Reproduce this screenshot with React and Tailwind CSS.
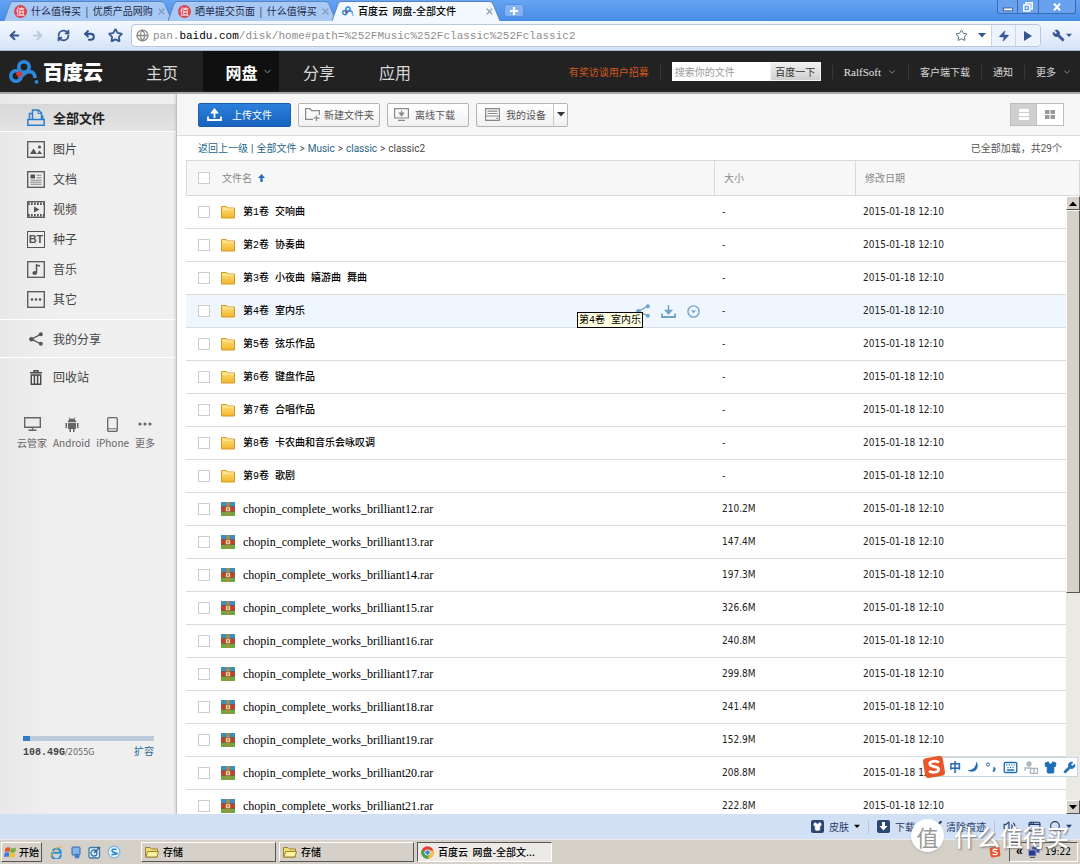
import React, { useState } from "react";
import {
  ArrowLeft,
  ArrowRight,
  RefreshCw,
  Undo2,
  Star,
  Globe,
  Wrench,
  ChevronDown,
  Shirt,
  Keyboard,
  Volume2,
  AppWindow,
  Search,
  Zap,
} from "lucide-react";

const DATE = "2015-01-18 12:10";

const files = [
  { name: "第1卷 交响曲", size: "-", type: "folder" },
  { name: "第2卷 协奏曲", size: "-", type: "folder" },
  { name: "第3卷 小夜曲 嬉游曲 舞曲", size: "-", type: "folder" },
  { name: "第4卷 室内乐", size: "-", type: "folder", hovered: true },
  { name: "第5卷 弦乐作品", size: "-", type: "folder" },
  { name: "第6卷 键盘作品", size: "-", type: "folder" },
  { name: "第7卷 合唱作品", size: "-", type: "folder" },
  { name: "第8卷 卡农曲和音乐会咏叹调", size: "-", type: "folder" },
  { name: "第9卷 歌剧", size: "-", type: "folder" },
  { name: "chopin_complete_works_brilliant12.rar", size: "210.2M", type: "rar" },
  { name: "chopin_complete_works_brilliant13.rar", size: "147.4M", type: "rar" },
  { name: "chopin_complete_works_brilliant14.rar", size: "197.3M", type: "rar" },
  { name: "chopin_complete_works_brilliant15.rar", size: "326.6M", type: "rar" },
  { name: "chopin_complete_works_brilliant16.rar", size: "240.8M", type: "rar" },
  { name: "chopin_complete_works_brilliant17.rar", size: "299.8M", type: "rar" },
  { name: "chopin_complete_works_brilliant18.rar", size: "241.4M", type: "rar" },
  { name: "chopin_complete_works_brilliant19.rar", size: "152.9M", type: "rar" },
  { name: "chopin_complete_works_brilliant20.rar", size: "208.8M", type: "rar" },
  { name: "chopin_complete_works_brilliant21.rar", size: "222.8M", type: "rar" },
];

/* ---------- icons ---------- */

const Caret = ({ className = "" }) => (
  <svg className={`shrink-0 ${className}`} width="8" height="5" viewBox="0 0 8 5">
    <path d="M0 0h8L4 4.6z" fill="currentColor" />
  </svg>
);

const CloudLogo = ({ className = "" }) => (
  <svg className={`shrink-0 ${className}`} viewBox="0 0 30 24" fill="none">
    <circle cx="15" cy="7" r="5.2" stroke="#2a8ae0" strokeWidth="3.6" />
    <circle cx="7" cy="16" r="5.2" stroke="#2a8ae0" strokeWidth="3.6" />
    <path d="M9.5 18.5 C14 16 15 12 19.5 11.6 C24 11.4 26 14 26 18" stroke="#2a8ae0" strokeWidth="3.6" />
    <path d="M6.5 13.5 L11 10.5 L14 14.5 L10 18z" fill="#d9383a" />
    <circle cx="27.5" cy="21.8" r="1.9" fill="#2a8ae0" />
  </svg>
);

const ZhiIcon = () => (
  <span className="flex size-[13px] shrink-0 items-center justify-center rounded-full bg-[#dc4455] text-[9px] leading-none text-white">
    值
  </span>
);

const FolderIcon = () => (
  <svg className="shrink-0" width="14" height="14" viewBox="0 0 14 14">
    <defs>
      <linearGradient id="fold" x1="0" y1="0" x2="0" y2="1">
        <stop offset="0" stopColor="#ffe07c" />
        <stop offset="1" stopColor="#f2b62e" />
      </linearGradient>
    </defs>
    <path d="M.5 1.5h5l1 1.5h7v10H.5z" fill="url(#fold)" stroke="#d59a26" />
    <path d="M1.500 4h11" stroke="#fff0b4" />
  </svg>
);

const RarIcon = () => (
  <svg className="shrink-0" width="14" height="14" viewBox="0 0 14 14">
    <rect width="14" height="4.500" fill="#3f8fb5" />
    <rect y="4.500" width="14" height="5" fill="#c2402f" />
    <rect y="9.500" width="14" height="4.500" fill="#6fa83a" />
    <path d="M0 4.500h14M0 9.500h14" stroke="#5b3a2c" strokeWidth=".6" />
    <rect x="5.500" width="3" height="14" fill="#b08a4c" />
    <rect x="4.500" y="4.800" width="5" height="4.600" rx="1" fill="#f2d9a0" stroke="#9c5a2c" strokeWidth=".8" />
    <rect x="6.500" y="6" width="1" height="2.200" fill="#9c3d1f" />
  </svg>
);

const Frame = ({ children }) => (
  <svg className="shrink-0" width="18" height="17" viewBox="0 0 18 17" fill="none" stroke="#555" strokeWidth="1.300">
    <rect x=".7" y=".7" width="16.600" height="15.600" />
    {children}
  </svg>
);

const sideIcons = {
  all: (
    <svg className="shrink-0" width="18" height="17" viewBox="0 0 18 17" fill="none" stroke="#2a7ed0" strokeWidth="1.500">
      <path d="M.8 10.500h16.400v5.700H.8z" />
      <path d="M2.500 10V4.500h3M5.500 10V1h6l3 3v6M15.800 10V6.500" />
      <path d="M11 1v3.500h3.500" strokeWidth="1" />
    </svg>
  ),
  image: (
    <Frame>
      <path d="M3 13l3.500-5.500L10 13zM10 13l2.500-3.500L15 13z" fill="#555" stroke="none" />
      <circle cx="12.500" cy="6" r="1.600" fill="#555" stroke="none" />
    </Frame>
  ),
  doc: (
    <Frame>
      <rect x="3.500" y="3.500" width="4.500" height="4" fill="#555" stroke="none" />
      <path d="M9.500 4.200h5M9.500 6.700h5M3.500 9.300h11M3.500 11.300h11M3.500 13.300h11" stroke="#888" strokeWidth="1.100" />
    </Frame>
  ),
  video: (
    <Frame>
      <path d="M1 2.800h16M1 14.200h16" strokeWidth="2.400" strokeDasharray="1.700 1.300" />
      <path d="M7 5.500l5.500 3-5.500 3z" fill="#555" stroke="none" />
    </Frame>
  ),
  music: (
    <Frame>
      <path d="M9.500 12V4l3.500.9" strokeWidth="1.500" />
      <ellipse cx="7.700" cy="12" rx="2.300" ry="1.900" fill="#555" stroke="none" />
    </Frame>
  ),
  other: (
    <Frame>
      <g fill="#555" stroke="none">
        <circle cx="5" cy="8.500" r="1.300" />
        <circle cx="9" cy="8.500" r="1.300" />
        <circle cx="13" cy="8.500" r="1.300" />
      </g>
    </Frame>
  ),
  seed: (
    <span className="flex h-[17px] w-[18px] shrink-0 items-center justify-center border border-[#555] font-['Liberation_Sans',sans-serif] text-[11px] font-bold leading-none text-[#555]">
      BT
    </span>
  ),
};

const ShareIcon = ({ className = "" }) => (
  <svg className={`shrink-0 ${className}`} width="14" height="14" viewBox="0 0 14 14" fill="currentColor">
    <path d="M12 2.200L2.500 7.200 12 12" fill="none" stroke="currentColor" strokeWidth="1.300" />
    <circle cx="11.800" cy="2.300" r="2" />
    <circle cx="2.400" cy="7.200" r="2.200" />
    <circle cx="11.800" cy="11.700" r="2" />
  </svg>
);

const TrashIcon = () => (
  <svg className="shrink-0" width="12" height="15" viewBox="0 0 12 15" fill="none" stroke="#484848" strokeWidth="1.400">
    <path d="M0 2.700h12M4 2.500V.7h4v1.800M1.300 5h9.400v9.200H1.300z" />
    <path d="M4.400 5v9M7.600 5v9" />
  </svg>
);

const DownloadIcon = ({ up = false }) => (
  <svg className="shrink-0" width="15" height="13" viewBox="0 0 15 13" fill="none" stroke="currentColor" strokeWidth="1.800">
    <path d="M1 8.500V12h13V8.500" />
    {up ? (
      <path d="M7.500 10V4M5 4.500l2.500-3 2.500 3z" fill="currentColor" strokeWidth="1.800" />
    ) : (
      <path d="M7.500 0v6M4.500 5.500h6l-3 3.200z" fill="currentColor" strokeWidth="1.400" />
    )}
  </svg>
);

const SogouIcon = ({ className = "" }) => (
  <svg className={`shrink-0 ${className}`} viewBox="0 0 24 24">
    <rect x="2" y="2" width="20" height="20" rx="3.500" fill="#e8552a" transform="rotate(-9 12 12)" />
    <path
      d="M17 7.500C14 5.300 7.500 6 7.800 9.200c.3 3.100 9 1.800 8.900 5.200-.1 3.200-6.500 3.800-9.700 1.600"
      fill="none"
      stroke="#fff"
      strokeWidth="2.700"
    />
  </svg>
);

const SmallFolder = () => (
  <svg className="shrink-0" width="14" height="12" viewBox="0 0 14 12">
    <path d="M.5 1.500h4.500l1.500 1.500h6v8H.5z" fill="#f5dc70" stroke="#9b8232" />
    <path d="M.8 11l2-5.500H13.500l-1.500 5.500z" fill="#fff0a0" stroke="#9b8232" />
  </svg>
);

/* ---------- browser chrome ---------- */

const Tab = ({ title, icon, active }) => (
  <div className={`relative -ml-1 flex h-[20px] w-[168px] items-center pl-[10px] pr-[7px] ${active ? "z-10" : ""}`}>
    <svg className="absolute inset-0 size-full" viewBox="0 0 168 20" preserveAspectRatio="none">
      <path
        d="M0 20L6 3Q7 .5 9 .5H157Q160 .5 161 3L168 20"
        fill={active ? "#f3f8ff" : "#a9c9f5"}
        stroke="#5a86c4"
      />
    </svg>
    <button className="relative flex min-w-0 flex-1 items-center gap-1 text-left">
      {icon}
      <span className={`whitespace-pre text-[10px] leading-[14px] ${active ? "font-medium text-black" : "text-[#1d2c48]"}`}>
        {title}
      </span>
    </button>
    <button aria-label="关闭标签" className="relative ml-1 text-[#7f93b3]">
      <svg width="7" height="7" viewBox="0 0 7 7" stroke="currentColor" strokeWidth="1.200">
        <path d="M.7.7l5.600 5.600M6.300.7L.7 6.300" />
      </svg>
    </button>
  </div>
);

const TabStrip = () => (
  <div className="flex h-[21px] shrink-0 items-end bg-linear-to-b from-[#66a3f3] to-[#478de8] pl-2">
    <Tab title="什么值得买  |  优质产品网购" icon={<ZhiIcon />} />
    <Tab title="晒单提交页面  |  什么值得买" icon={<ZhiIcon />} />
    <Tab title="百度云  网盘-全部文件" icon={<CloudLogo className="h-[10px] w-[12px]" />} active />
    <button
      aria-label="新标签"
      className="mb-1 ml-1 flex h-[13px] w-[20px] items-center justify-center rounded-[3px] border border-[#5a90da] bg-[#83b3f4]"
    >
      <svg width="8" height="8" viewBox="0 0 8 8">
        <path d="M4 0v8M0 4h8" stroke="#fff" strokeWidth="2.200" />
      </svg>
    </button>
    <div className="mb-auto ml-auto mr-1 flex h-[14px] divide-x divide-[#3c6cae] rounded-b-[3px] border border-t-0 border-[#3c6cae] bg-[#68a2ee] text-white">
      <button aria-label="最小化" className="flex w-[20px] items-center justify-center">
        <svg width="10" height="10" viewBox="0 0 10 10"><rect x=".5" y="6" width="9" height="2.800" fill="#fff" stroke="#32558c" strokeWidth=".8" /></svg>
      </button>
      <button aria-label="还原" className="flex w-[21px] items-center justify-center">
        <svg width="10" height="10" viewBox="0 0 10 10" fill="none" stroke="#fff" strokeWidth="1.500">
          <path d="M3 2.500V.8h6.200V7H7.500" />
          <rect x=".8" y="3" width="6" height="6" />
          <path d="M3 6h1.800" />
        </svg>
      </button>
      <button aria-label="关闭" className="flex w-[36px] items-center justify-center">
        <svg width="8" height="8" viewBox="0 0 8 8" stroke="#fff" strokeWidth="2"><path d="M1 .5l6 7M7 .5l-6 7" /></svg>
      </button>
    </div>
  </div>
);

const AddressBar = () => (
  <div className="flex h-[30px] shrink-0 items-center border-b border-[#a9bbd4] bg-linear-to-b from-[#f3f8ff] to-[#d6e4f8] pl-2 pr-2 text-[#35568f]">
    <button aria-label="后退"><ArrowLeft size={13} strokeWidth={3.5} /></button>
    <button aria-label="前进" className="ml-[10px] text-[#bccade]"><ArrowRight size={13} strokeWidth={3.5} /></button>
    <button aria-label="刷新" className="ml-[13px]"><RefreshCw size={13} strokeWidth={3.5} /></button>
    <button aria-label="撤销" className="ml-[13px]"><Undo2 size={13} strokeWidth={3.8} /></button>
    <button aria-label="收藏" className="ml-3"><Star size={15} strokeWidth={2.8} /></button>
    <div className="ml-2 flex h-[23px] min-w-0 flex-1 items-center rounded-[4px] border border-[#b9c7dc] bg-white pl-1">
      <Globe size={13} strokeWidth={2.4} className="shrink-0 text-[#8a8a8a]" />
      <div className="ml-1 min-w-0 flex-1 truncate font-['Liberation_Mono',monospace] text-[11px] leading-[16px] text-[#8e8e8e]">
        pan.<span className="text-black">baidu.com</span>/disk/home#path=%252FMusic%252Fclassic%252Fclassic2
      </div>
      <button aria-label="加入收藏夹"><Star size={13} strokeWidth={1.8} className="text-[#4d6f80]" /></button>
      <Caret className="ml-[10px] mr-[5px]" />
      <div className="flex h-full divide-x divide-[#ccd6e6] rounded-r-[4px] border-l border-[#ccd6e6] bg-[#edf3fc]">
        <button aria-label="极速模式" className="flex w-6 items-center justify-center"><Zap size={12} fill="currentColor" strokeWidth={1} /></button>
        <button aria-label="转到" className="flex w-6 items-center justify-center">
          <svg width="8" height="10" viewBox="0 0 8 10"><path d="M0 0l8 5-8 5z" fill="currentColor" /></svg>
        </button>
      </div>
    </div>
    <button aria-label="工具" className="ml-[11px] flex items-center gap-px">
      <Wrench size={13} fill="currentColor" strokeWidth={1.5} className="-scale-x-100" />
      <Caret className="w-[6px]" />
    </button>
  </div>
);

/* ---------- site header ---------- */

const Divider = () => <span className="mx-[11px] h-[14px] w-px bg-[#3a3a3a]" />;

const SiteHeader = () => (
  <header className="flex h-[43px] shrink-0 items-center border-b-2 border-[#a4a4a4] bg-[#222] pl-[9px] pr-2 text-[#d8d8d8]">
    <a href="#home" className="flex items-center gap-1">
      <CloudLogo className="h-[24px] w-[30px]" />
      <span className="text-[20px] font-black leading-[24px] text-white">百度云</span>
    </a>
    <nav className="flex h-full text-[16px] leading-[20px]">
      <a href="#index" className="flex w-[100px] items-center justify-center pl-[18px]">主页</a>
      <a href="#disk" className="flex w-[76px] items-center justify-center gap-1 bg-[#101010] pl-4 font-bold text-white">
        网盘 <ChevronDown size={11} className="shrink-0 text-[#999]" />
      </a>
      <a href="#share" className="flex w-[76px] items-center justify-center pl-1">分享</a>
      <a href="#apps" className="flex w-[76px] items-center justify-center pl-1">应用</a>
    </nav>
    <div className="ml-auto flex items-center text-[10px] leading-[14px]">
      <a href="#interview" className="text-[#d2581e]">有奖访谈用户招募</a>
      <Divider />
      <form className="flex h-[19px] bg-white">
        <input
          aria-label="搜索你的文件"
          placeholder="搜索你的文件"
          className="w-[98px] px-[3px] text-[10px] text-black outline-none placeholder:text-[#999]"
        />
        <button type="button" className="w-[51px] border border-[#f4f4f4] bg-linear-to-b from-[#f0f0f0] to-[#cfcfcf] text-[#333]">
          百度一下
        </button>
      </form>
      <Divider />
      <a href="#user" className="flex items-center gap-[6px] font-['Liberation_Serif',serif] text-[11px] text-[#e2e2e2]">
        RalfSoft <ChevronDown size={10} className="text-[#999]" />
      </a>
      <Divider />
      <a href="#client">客户端下载</a>
      <Divider />
      <a href="#notice">通知</a>
      <Divider />
      <a href="#more" className="flex items-center gap-[6px]">
        更多 <ChevronDown size={10} className="text-[#999]" />
      </a>
    </div>
  </header>
);

/* ---------- sidebar ---------- */

const categories = [
  { key: "image", label: "图片" },
  { key: "doc", label: "文档" },
  { key: "video", label: "视频" },
  { key: "seed", label: "种子" },
  { key: "music", label: "音乐" },
  { key: "other", label: "其它" },
];

const Device = ({ label, children }) => (
  <a href="#device" className="flex flex-col items-center gap-1">
    <span className="flex h-[16px] items-center">{children}</span>
    <span className="text-[10px] leading-[14px]">{label}</span>
  </a>
);

const Sidebar = () => (
  <aside className="flex w-[177px] shrink-0 flex-col border-r border-[#c9c9c9] bg-linear-to-r from-[#e8e8e8] to-[#efefef] to-30% pt-[10px] text-[12px] leading-[16px] text-[#444]">
    <a href="#all" className="flex h-[28px] items-center gap-2 border-b border-white bg-linear-to-b from-[#d9d9d9] to-[#e3e3e3] pl-[27px] text-[13px] font-bold text-[#222]">
      {sideIcons.all}
      全部文件
    </a>
    <nav className="flex flex-col border-b border-white pt-[2px] pb-[5px]">
      {categories.map((c) => (
        <a key={c.key} href={`#${c.key}`} className="flex h-[30px] items-center gap-2 pl-[27px]">
          {sideIcons[c.key]}
          {c.label}
        </a>
      ))}
    </nav>
    <a href="#myshare" className="flex h-[38px] items-center gap-[10px] border-b border-white pl-[29px]">
      <ShareIcon className="text-[#555]" />
      我的分享
    </a>
    <a href="#recycle" className="flex h-[38px] items-center gap-[11px] pl-[30px]">
      <TrashIcon />
      回收站
    </a>
    <div className="mt-[20px] flex gap-[6px] pl-[17px] text-[#666]">
      <Device label="云管家">
        <svg width="17" height="14" viewBox="0 0 17 14" fill="none" stroke="currentColor" strokeWidth="1.400">
          <path d="M.7.7h15.600v9.600H.7zM8.500 10.500v2.500M4.500 13.300h8" />
        </svg>
      </Device>
      <Device label="Android">
        <svg width="14" height="15" viewBox="0 0 14 15" fill="currentColor">
          <path d="M3 5a4 3.500 0 018 0zM3 5.700h8V12H9.500v3H8v-3H6v3H4.500v-3H3zM.5 6H2v5H.5zM12 6h1.500v5H12z" />
          <path d="M4 .3l1 2M10 .3l-1 2" stroke="currentColor" strokeWidth=".8" />
        </svg>
      </Device>
      <Device label="iPhone">
        <svg width="11" height="15" viewBox="0 0 11 15" fill="none" stroke="currentColor" strokeWidth="1.300">
          <rect x=".7" y=".7" width="9.600" height="13.600" rx="1.200" />
          <path d="M1 11.800h9" strokeWidth=".9" />
        </svg>
      </Device>
      <Device label="更多">
        <svg width="14" height="4" viewBox="0 0 14 4" fill="currentColor">
          <circle cx="2" cy="2" r="1.600" /><circle cx="7" cy="2" r="1.600" /><circle cx="12" cy="2" r="1.600" />
        </svg>
      </Device>
    </div>
    <div className="mt-auto pb-[54px] pl-[23px] pr-[22px]">
      <div className="h-[5px] bg-[#bccbdc]">
        <div className="h-full bg-[#2f7cc8]" style={{ width: `${(108.49 / 2055) * 100}%` }} />
      </div>
      <div className="mt-[3px] flex justify-between text-[10px] leading-[14px]">
        <span className="text-[#666]">
          <b className="font-['Liberation_Mono',monospace] text-[#444]">108.49G</b>
          <span className="font-['DejaVu_Sans_Condensed','DejaVu_Sans',sans-serif] text-[9px]">/2055G</span>
        </span>
        <a href="#expand" className="text-[#2a6a94]">扩容</a>
      </div>
    </div>
  </aside>
);

/* ---------- file list ---------- */

const toolButton =
  "flex h-6 items-center rounded-[2px] border border-[#b4b4b4] bg-linear-to-b from-white to-[#f1f1f1] text-[#555]";

const Toolbar = () => (
  <div className="flex h-[42px] shrink-0 items-center gap-[7px] border-b border-[#dcdcdc] bg-[#f6f6f6] pl-[21px] pr-4 text-[10px] leading-[14px]">
    <button className="flex h-6 w-[93px] items-center gap-[10px] rounded-[2px] border border-[#1a5cad] bg-linear-to-b from-[#2b80dc] to-[#1763bd] pl-[8px] text-white">
      <DownloadIcon up />
      上传文件
    </button>
    <button className={`${toolButton} w-[82px] gap-1 pl-[6px]`}>
      <svg className="shrink-0" width="15" height="13" viewBox="0 0 15 13" fill="none" stroke="#888" strokeWidth="1.200">
        <path d="M8 11.400H.6V.6h4.400l1.500 2h7.900V7M11.500 7.500V13M8.800 10.200h5.700" />
      </svg>
      <span className="whitespace-nowrap">新建文件夹</span>
    </button>
    <button className={`${toolButton} w-[82px] gap-[6px] pl-[6px]`}>
      <svg width="15" height="13" viewBox="0 0 15 13" fill="none" stroke="#888" strokeWidth="1.200">
        <path d="M.6.600h13.800v9.400H.6zM4 12.400h7" />
        <path d="M7.500 2.500v3M5.500 5.200h4l-2 2.500z" fill="#888" />
      </svg>
      离线下载
    </button>
    <div className={toolButton}>
      <button className="flex h-full w-[76px] items-center gap-[6px] pl-2">
        <svg width="15" height="13" viewBox="0 0 15 13" fill="none" stroke="#888" strokeWidth="1.200">
          <path d="M.6.600h13.800v11.800H.6z" />
          <path d="M2.500 3.200h10M2.500 5.500h10M1 8h13M11.500 10.300h1.500" />
        </svg>
        我的设备
      </button>
      <button aria-label="选择设备" className="flex h-full w-[14px] items-center justify-center border-l border-[#c9c9c9]">
        <Caret className="text-[#333]" />
      </button>
    </div>
    <div className="ml-auto flex h-[23px] divide-x divide-[#c4c4c4] border border-[#bdbdbd]">
      <button aria-label="列表模式" className="flex w-[26px] items-center justify-center bg-[#cfcfcf]">
        <svg width="10" height="11" viewBox="0 0 10 11" fill="#fff">
          <path d="M0 0h10v3H0zM0 4h10v3H0zM0 8h10v3H0z" />
        </svg>
      </button>
      <button aria-label="缩略图模式" className="flex w-[26px] items-center justify-center bg-white">
        <svg width="10" height="9" viewBox="0 0 10 9" fill="#999">
          <path d="M0 0h4.500v4H0zM5.500 0H10v4H5.500zM0 5h4.500v4H0zM5.500 5H10v4H5.500z" />
        </svg>
      </button>
    </div>
  </div>
);

const Breadcrumb = () => (
  <div className="flex h-6 shrink-0 items-center gap-[3px] pl-[21px] pr-[18px] pt-px font-['Roboto','Noto_Sans_CJK_SC',sans-serif] text-[10px] leading-[14px] text-[#444]">
    <a href="#up" className="text-[#1f6587]">返回上一级</a>
    <span>|</span>
    <a href="#root" className="text-[#1f6587]">全部文件</a>
    <span>&gt;</span>
    <a href="#music" className="text-[#1f6587]">Music</a>
    <span>&gt;</span>
    <a href="#classic" className="text-[#1f6587]">classic</a>
    <span>&gt;</span>
    <span>classic2</span>
    <span className="ml-auto text-[#555]">已全部加载，共29个</span>
  </div>
);

const checkboxStyle = "size-3 shrink-0 appearance-none border border-[#cdcdcd] bg-white checked:bg-[#2f7cc8]";

const nameFont = "font-['Liberation_Mono','Noto_Sans_CJK_SC',monospace] text-[10px]";

const FileRow = ({ file, id, checked, onToggle }) => {
  const cell = `h-[33px] border-b p-0 ${file.hovered ? "border-[#d3e0ea] bg-[#eff6fd]" : "border-[#dadada]"}`;
  const numbers = "font-['DejaVu_Sans_Condensed','DejaVu_Sans',sans-serif] text-[10px] leading-[14px] text-[#222]";
  return (
    <tr>
      <td className={`${cell} relative`}>
        <div className="flex items-center pl-3">
          <input id={id} type="checkbox" checked={checked} onChange={onToggle} className={checkboxStyle} />
          <span className="ml-[11px] mr-2">{file.type === "folder" ? <FolderIcon /> : <RarIcon />}</span>
          <label
            htmlFor={id}
            className={
              file.type === "rar"
                ? "font-['Liberation_Serif',serif] text-[12px] leading-[14px] text-black"
                : `${nameFont} pt-[2px] font-medium leading-[14px] text-black`
            }
          >
            {file.name}
          </label>
          {file.hovered && (
            <div className="ml-auto flex items-center gap-[11px] pr-[14px] text-[#6fa3c8]">
              <button aria-label="分享"><ShareIcon /></button>
              <button aria-label="下载"><DownloadIcon /></button>
              <button aria-label="更多操作">
                <svg width="13" height="13" viewBox="0 0 13 13" fill="none" stroke="currentColor" strokeWidth="1.400">
                  <circle cx="6.500" cy="6.500" r="5.600" />
                  <path d="M4 5.500h5l-2.500 2.700z" fill="currentColor" stroke="none" />
                </svg>
              </button>
            </div>
          )}
        </div>
        {file.hovered && (
          <span className={`absolute right-[71px] top-[17px] z-10 whitespace-nowrap border border-black bg-[#ffffe1] px-px pt-px leading-[13px] text-black ${nameFont}`}>
            {file.name}
          </span>
        )}
      </td>
      <td className={`${cell} pl-2 ${numbers}`}>{file.size}</td>
      <td className={`${cell} pl-2 ${numbers}`}>{DATE}</td>
    </tr>
  );
};

const scrollButton =
  "flex h-[14px] shrink-0 items-center justify-center border border-t-white border-l-white border-r-[#555] border-b-[#555] bg-[#d6d2ca] text-black";

const FileTable = () => {
  const [selected, setSelected] = useState([]);

  const toggle = (name) => {
    setSelected((prev) => (prev.includes(name) ? prev.filter((n) => n !== name) : [...prev, name]));
  };

  const toggleAll = () => {
    setSelected(selected.length === files.length ? [] : files.map((f) => f.name));
  };

  const head = "h-[36px] border-y border-[#d9d9d9] bg-[#f7f7f7] p-0 text-left font-normal";

  return (
    <div className="relative min-h-0 flex-1 overflow-hidden pl-[9px]">
      <table className="w-full table-fixed border-separate border-spacing-0">
        <thead className="text-[10px] leading-[14px] text-[#888]">
          <tr>
            <th className={`${head} border-l`}>
              <div className="flex items-center pl-[11px]">
                <input
                  type="checkbox"
                  aria-label="全选"
                  checked={selected.length === files.length}
                  onChange={toggleAll}
                  className={checkboxStyle}
                />
                <span className="ml-[12px]">文件名</span>
                <svg className="ml-[6px]" width="7" height="8" viewBox="0 0 7 8">
                  <path d="M3.500 0L7 4H4.700v4H2.300V4H0z" fill="#2a6fb5" />
                </svg>
              </div>
            </th>
            <th className={`${head} w-[141px] border-l pl-[9px]`}>大小</th>
            <th className={`${head} w-[225px] border-x pl-[9px]`}>修改日期</th>
          </tr>
        </thead>
        <tbody>
          {files.map((file, i) => (
            <FileRow
              key={file.name}
              id={`file-${i}`}
              file={file}
              checked={selected.includes(file.name)}
              onToggle={() => toggle(file.name)}
            />
          ))}
        </tbody>
      </table>
      {/* old style scrollbar over the right edge of the rows */}
      <div className="absolute bottom-0 right-0 top-[36px] flex w-[14px] flex-col bg-[#ebe9e4]">
        <button aria-label="向上滚动" className={scrollButton}><Caret className="rotate-180" /></button>
        <div className="h-[62%] border border-t-white border-l-white border-r-[#555] border-b-[#555] bg-[#d6d2ca]" />
        <button aria-label="向下滚动" className={`${scrollButton} mt-auto`}><Caret /></button>
      </div>
    </div>
  );
};

/* ---------- bottom bars ---------- */

const StatusBar = () => (
  <div className="flex h-[25px] shrink-0 items-center justify-end bg-[#d2e0f6] pr-2 text-[10px] leading-[14px] text-[#1f3a68]">
    <button className="flex items-center gap-[5px]">
      <span className="flex size-[13px] items-center justify-center rounded-[2px] bg-[#2c4672] text-white"><Shirt size={9} fill="currentColor" /></span>
      皮肤
      <Caret className="w-[6px] text-black" />
    </button>
    <span className="mx-2 h-[14px] w-px bg-[#b7c7e0]" />
    <button className="flex items-center gap-[5px]">
      <span className="flex size-[13px] items-center justify-center rounded-[2px] bg-[#2c4672] text-white">
        <svg width="9" height="9" viewBox="0 0 9 9"><path d="M3 0h3v4h2.500l-4 4.500L.5 4H3z" fill="currentColor" /></svg>
      </span>
      下载
    </button>
    <button className="ml-[14px] flex items-center gap-[4px]">
      <svg width="13" height="12" viewBox="0 0 13 12" fill="none" stroke="currentColor" strokeWidth="2">
        <path d="M12.500 0L7 6M2 6l6 4.500M1 9l3 2.500" />
      </svg>
      清除痕迹
    </button>
    <span className="mx-2 h-[14px] w-px bg-[#b7c7e0]" />
    <button aria-label="静音"><Volume2 size={13} /></button>
    <button aria-label="窗口" className="ml-3"><AppWindow size={13} /></button>
    <button aria-label="缩放" className="ml-2 flex items-center gap-1"><Search size={13} /><Caret className="w-[6px]" /></button>
  </div>
);

const raised = "border border-t-white border-l-white border-r-[#555] border-b-[#555]";
const sunken = "border border-t-[#555] border-l-[#555] border-r-white border-b-white";

const Taskbar = () => (
  <footer className="flex h-[25px] shrink-0 items-center border-t border-[#eceae5] bg-[#d5d0c8] pl-[1px] pr-[2px] text-[10px] font-medium leading-[14px] text-black">
    <button className={`flex h-[20px] w-[41px] items-center gap-[2px] pl-[2px] ${raised}`}>
      <svg className="shrink-0" width="13" height="12" viewBox="0 0 13 12">
        <path d="M1.500 2Q4 .5 6.200 1.800L5.500 6Q3 5 .8 6.200z" fill="#e0532c" />
        <path d="M7 2q2.500 1 5-.3L11.300 6Q8.500 7.200 6.200 6.200z" fill="#6dae3c" />
        <path d="M.7 7Q3 5.800 5.300 6.900L4.700 11Q2.500 9.800 0 11z" fill="#3b77d8" />
        <path d="M6.100 7.100q2.500 1 5-.2l-.7 4Q8 12.200 5.500 11.100z" fill="#f2c230" />
      </svg>
      <span className="whitespace-nowrap">开始</span>
    </button>
    <div className="ml-2 mr-5 flex items-center gap-[6px]">
      <svg width="13" height="13" viewBox="0 0 13 13" fill="none">
        <path d="M10.800 8.500A4.500 4.500 0 112.300 6.800h8.500a4.300 4.300 0 00-8-2" stroke="#2a8ed8" strokeWidth="2" />
        <path d="M1 12C-.5 9 7-.5 12.500 1" stroke="#e8b52e" />
      </svg>
      <svg width="13" height="13" viewBox="0 0 13 13">
        <rect x="3" y="1" width="8" height="8" rx="1" fill="#7fb4ec" stroke="#3565ac" />
        <circle cx="8" cy="10" r="2.500" fill="#3f7ec8" />
      </svg>
      <svg width="13" height="13" viewBox="0 0 13 13" fill="none">
        <rect x="1" y="1.500" width="10.500" height="10.500" rx="1.500" fill="#e8f2fa" stroke="#3a7aa8" strokeWidth="1.300" />
        <circle cx="6" cy="7" r="3" stroke="#2d75b0" strokeWidth="1.300" />
        <path d="M6 7l6-6" stroke="#2d5580" strokeWidth="1.300" />
      </svg>
      <svg width="14" height="14" viewBox="0 0 14 14" fill="none">
        <circle cx="7" cy="7" r="5.800" fill="#e5f1fa" stroke="#7db4dc" strokeWidth="1.200" />
        <path d="M9.500 4.500Q5 3.500 5 5.500T9 8t-4.500 1.800" stroke="#2f86c6" strokeWidth="1.500" />
      </svg>
    </div>
    <div className="flex min-w-0 gap-[3px]">
      <button className={`flex h-[20px] w-[135px] items-center gap-[4px] pl-[3px] ${raised}`}><SmallFolder />存储</button>
      <button className={`flex h-[20px] w-[135px] items-center gap-[4px] pl-[3px] ${raised}`}><SmallFolder />存储</button>
      <button className={`flex h-[20px] w-[135px] items-center gap-[4px] bg-[#eceae6] pl-[3px] ${sunken}`}>
        <svg className="shrink-0" width="13" height="13" viewBox="0 0 13 13">
          <circle cx="6.500" cy="6.500" r="6.200" fill="#e34133" />
          <path d="M.9 4A6.200 6.200 0 006.500 12.700L9 8 6.500 6.500z" fill="#46a548" />
          <path d="M12.300 4.500A6.200 6.200 0 016.500 12.700L9.500 7.500 8.500 4.500z" fill="#f5cb34" />
          <circle cx="6.500" cy="6.500" r="2.700" fill="#3f7fd6" stroke="#fff" strokeWidth=".9" />
        </svg>
        <span className="whitespace-pre">百度云  网盘-全部文...</span>
      </button>
    </div>
    <div className="ml-auto flex items-center gap-2">
      <SogouIcon className="size-[12px]" />
      <div className={`flex h-[20px] items-center gap-[5px] px-[6px] ${sunken}`}>
        <span className="font-['Liberation_Mono',monospace] text-[12px] font-bold leading-[12px]">«</span>
        <svg width="12" height="12" viewBox="0 0 12 12">
          <rect x="4" y=".5" width="7.500" height="6" fill="#3c4d9c" stroke="#8a8fb8" />
          <rect x=".5" y="4" width="7.500" height="6" fill="#2a3a90" stroke="#9da2c6" />
          <path d="M2 11.500h5" stroke="#555" />
        </svg>
        <span className="font-['DejaVu_Sans_Condensed','DejaVu_Sans',sans-serif] font-normal leading-[12px]">19:22</span>
      </div>
    </div>
  </footer>
);

/* ---------- floating pieces ---------- */

const ImeBar = () => (
  <div className="absolute bottom-[87px] right-[2px] z-20 flex h-[20px] items-center gap-[6px] border border-[#c5d6e6] bg-white pl-[14px] pr-px text-[#1f6fb8]">
    <SogouIcon className="absolute -left-[13px] -top-[3px] size-[24px]" />
    <span className="text-[12px] font-bold leading-[14px]">中</span>
    <svg width="12" height="12" viewBox="0 0 12 12"><path d="M9 .5A6 6 0 11.500 9 7.500 7.500 0 009 .5z" fill="currentColor" /></svg>
    <svg width="12" height="12" viewBox="0 0 12 12" fill="none" stroke="currentColor">
      <circle cx="3" cy="3.500" r="1.500" /><path d="M8.500 6.500q2.500 1.500-.5 4" strokeWidth="2" />
    </svg>
    <Keyboard size={15} strokeWidth={2.2} />
    <svg width="14" height="13" viewBox="0 0 14 13" fill="none" stroke="#a9b6c4" strokeWidth="1.300">
      <circle cx="5" cy="3" r="2" fill="#a9b6c4" /><path d="M1 10V7h6M6.500 7.500h7v5h-7zM10 8v4" />
    </svg>
    <Shirt size={13} fill="currentColor" />
    <Wrench size={13} fill="currentColor" strokeWidth={1.5} />
  </div>
);

const Watermark = () => (
  <div className="pointer-events-none absolute bottom-[12px] right-[11px] z-30 flex items-center gap-[10px] text-white">
    <span className="flex size-[33px] items-center justify-center rounded-full bg-white text-[22px] leading-none text-[#999] shadow">
      值
    </span>
    <span className="text-[23px] font-medium leading-[24px] [text-shadow:1px_1px_2px_#777]">什么值得买</span>
  </div>
);

const App = () => {
  return (
    <div className="relative flex h-screen w-full flex-col overflow-hidden bg-white font-['Noto_Sans_CJK_SC',sans-serif]">
      <TabStrip />
      <AddressBar />
      <SiteHeader />
      <div className="flex min-h-0 flex-1">
        <Sidebar />
        <main className="flex min-w-0 flex-1 flex-col shadow-[-1px_0_3px_#bbb]">
          <Toolbar />
          <Breadcrumb />
          <FileTable />
        </main>
      </div>
      <StatusBar />
      <Taskbar />
      <ImeBar />
      <Watermark />
    </div>
  );
};

export default App;
